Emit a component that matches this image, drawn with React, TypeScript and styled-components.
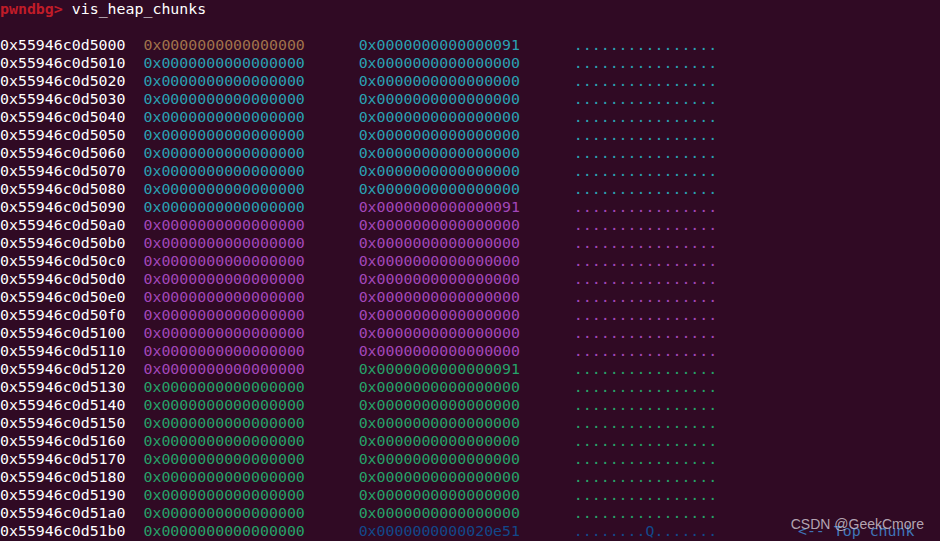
import styled, { createGlobalStyle } from 'styled-components';

const GlobalStyle = createGlobalStyle`
  html, body {
    margin: 0;
    padding: 0;
    background: #300a24;
  }
`;

const palette = {
  fg: '#ffffff',
  red: '#c01c28',
  yellow: '#a2734c',
  cyan: '#2aa1b3',
  magenta: '#a347ba',
  green: '#26a269',
  blue: '#12488b',
};

type Tone = keyof typeof palette;

const Terminal = styled.div`
  position: relative;
  width: 940px;
  height: 541px;
  overflow: hidden;
  background: #300a24;
  font-family: 'DejaVu Sans Mono', 'Liberation Mono', monospace;
  font-size: 14.9px;
  line-height: 18px;
  color: ${palette.fg};
`;

const Line = styled.div`
  height: 18px;
  white-space: pre;
`;

const Prompt = styled.span`
  color: ${palette.red};
  font-weight: bold;
`;

const Cell = styled.span<{ $tone: Tone }>`
  color: ${(p) => palette[p.$tone]};
`;

const TopChunk = styled.span`
  color: #3f74b8;
`;

const Watermark = styled.div`
  position: absolute;
  right: 16px;
  bottom: 8px;
  font-family: 'Liberation Sans', Arial, sans-serif;
  font-size: 14px;
  color: rgba(215, 205, 215, 0.8);
  white-space: nowrap;
`;

const ZERO = '0x0000000000000000';
const DOTS = '................';

type Row = {
  addr: string;
  left: Tone;
  right: Tone;
  value: string;
  ascii: string;
  top?: boolean;
};

// 每个chunk 0x90 大小, 最后一行是 top chunk
const buildRows = (): Row[] =>
  Array.from({ length: 28 }, (_, i) => {
    const addr = '0x55946c0d5' + (i * 16).toString(16).padStart(3, '0').slice(-3);
    if (i === 27) {
      return { addr, left: 'green', right: 'blue', value: '0x0000000000020e51', ascii: '........Q.......', top: true };
    }
    let left: Tone = i < 10 ? 'cyan' : i < 19 ? 'magenta' : 'green';
    let right: Tone = left;
    let value = ZERO;
    if (i === 0) {
      left = 'yellow';
      right = 'cyan';
      value = '0x0000000000000091';
    } else if (i === 9) {
      right = 'magenta';
      value = '0x0000000000000091';
    } else if (i === 18) {
      left = 'magenta';
      right = 'green';
      value = '0x0000000000000091';
    }
    return { addr, left, right, value, ascii: DOTS };
  });

export default function App() {
  const rows = buildRows();
  return (
    <>
      <GlobalStyle />
      <Terminal>
        <Line>
          <Prompt>pwndbg&gt;</Prompt> vis_heap_chunks
        </Line>
        <Line />
        {rows.map((r) => (
          <Line key={r.addr}>
            {r.addr}
            {'  '}
            <Cell $tone={r.left}>{ZERO}</Cell>
            {'      '}
            <Cell $tone={r.right}>{r.value}</Cell>
            {'      '}
            <Cell $tone={r.right}>{r.ascii}</Cell>
            {r.top && <TopChunk>{'         <-- Top chunk'}</TopChunk>}
          </Line>
        ))}
        <Watermark>CSDN @GeekCmore</Watermark>
      </Terminal>
    </>
  );
}
